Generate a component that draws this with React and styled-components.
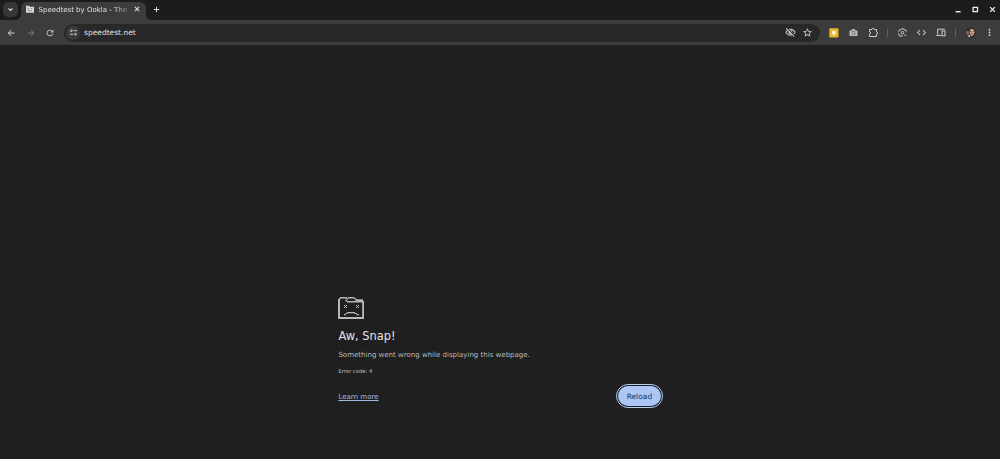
import React from 'react';
import styled, { createGlobalStyle } from 'styled-components';
import {
    MdArrowBack,
    MdArrowForward,
    MdRefresh,
    MdOutlineVisibilityOff,
    MdStarBorder,
    MdCode,
    MdMoreVert,
} from 'react-icons/md';

const GlobalStyle = createGlobalStyle`
    * {
        box-sizing: border-box;
    }
    body {
        margin: 0;
        background: #1f1f1f;
        font-family: "DejaVu Sans", sans-serif;
        overflow: hidden;
    }
    svg {
        display: block;
        flex: none;
    }
`;

const Browser = styled.div`
    display: flex;
    flex-direction: column;
    width: 100%;
    height: 459px;
    background: #1f1f1f;
`;

const TabStrip = styled.div`
    display: flex;
    align-items: flex-end;
    height: 20px;
    background: #1b1d1c;
    color: #dcdcdc;
`;

const TabSearch = styled.div`
    display: flex;
    align-items: center;
    justify-content: center;
    width: 15px;
    height: 15px;
    margin: 0 3.5px 3.5px 2.5px;
    border-radius: 5px;
    background: #363736;
`;

const Tab = styled.div`
    position: relative;
    display: flex;
    align-items: center;
    width: 125px;
    height: 18.5px;
    padding: 0 4px 3px 4.5px;
    border-radius: 6px 6px 0 0;
    background: #3c3c3c;

    /* flared feet of the active tab */
    &:before,
    &:after {
        content: '';
        position: absolute;
        bottom: 0;
        width: 5px;
        height: 5px;
    }
    &:before {
        left: -5px;
        background: radial-gradient(circle at 0 0, transparent 4.5px, #3c3c3c 5px);
    }
    &:after {
        right: -5px;
        background: radial-gradient(circle at 100% 0, transparent 4.5px, #3c3c3c 5px);
    }
`;

const TabTitle = styled.div`
    width: 90px;
    margin: 0 4.5px 0 5px;
    padding-top: 1px;
    white-space: nowrap;
    font-size: 7px;
    line-height: 10px;
    color: #e0e0e0;
    mask-image: linear-gradient(to right, #000 82%, rgba(0, 0, 0, 0.25) 100%);
`;

const NewTab = styled.div`
    margin: 0 0 6px 6px;
`;

const WindowControls = styled.div`
    display: flex;
    align-items: center;
    gap: 8px;
    height: 18px;
    margin: 0 3px 2px auto;
    color: #f0f0f0;
`;

const Toolbar = styled.div`
    display: flex;
    align-items: center;
    height: 25px;
    background: #3c3c3c;
    color: #cfcfcf;
`;

const Slot = styled.div`
    display: flex;
    align-items: center;
    justify-content: center;
    flex: none;
    width: ${({ $w }) => $w || 19.5}px;
    color: ${({ $muted }) => ($muted ? '#7b7b7b' : 'inherit')};
`;

const AddressBar = styled.div`
    display: flex;
    align-items: center;
    width: 756px;
    height: 18px;
    margin: 0 4.5px 0 4px;
    padding: 0 3.5px 0 2px;
    border-radius: 9px;
    background: #282828;
`;

const SiteInfo = styled.div`
    display: flex;
    align-items: center;
    justify-content: center;
    width: 14px;
    height: 14px;
    border-radius: 50%;
    background: #3b3b3b;
`;

const Url = styled.div`
    flex: 1;
    margin-left: 4px;
    font-size: 7.5px;
    line-height: 12px;
    color: #e2e2e2;
`;

const Divider = styled.div`
    width: 1px;
    height: 8px;
    margin: 0 4.2px;
    background: #606060;
`;

const Page = styled.main`
    width: 325.5px;
    margin: 252px 0 0 338.4px;
`;

const Heading = styled.h1`
    margin: 8px 0 0;
    font-size: 11.4px;
    font-weight: 400;
    line-height: 16px;
    color: #e2e2e2;
`;

const Message = styled.p`
    margin: 5px 0 0;
    font-size: 7.03px;
    line-height: 11px;
    color: #bcbcbc;
`;

const ErrorCode = styled.div`
    margin-top: 7px;
    font-size: 5.25px;
    line-height: 9px;
    color: #c4c4c4;
`;

const Actions = styled.div`
    display: flex;
    align-items: center;
    justify-content: space-between;
    margin-top: 10px;
    padding-right: 3px;
`;

const LearnMore = styled.a`
    font-size: 7.05px;
    line-height: 11px;
    color: #a3b8e2;
    text-decoration: underline;
`;

const ReloadButton = styled.button`
    width: 43px;
    height: 20px;
    padding: 0;
    border: 0;
    border-radius: 10px;
    outline: 1.5px solid #b4cbf5;
    outline-offset: 1px;
    background: #aec6f4;
    color: #2a4a86;
    font: 500 7.5px/19px "DejaVu Sans", sans-serif;
    -webkit-text-stroke: 0.12px;
`;

const FolderIcon = () => (
    <svg width="8" height="8" viewBox="0 0 8 8">
        <path d="M0 .8h3.2l.8.9h4v6H0z" fill="#d6d6d6" />
        <path d="M1.7 3.3h1v.8h-1zM5.2 3.3h1v.8h-1zM2 5.5h4v.6H2z" fill="#555" />
    </svg>
);

const ChevronIcon = () => (
    <svg width="9" height="9" viewBox="0 0 9 9" fill="none" stroke="currentColor" strokeWidth="1.1">
        <path d="M2.5 3.5l2 2 2-2" />
    </svg>
);

const CrossIcon = ({ size = 8 }) => (
    <svg width={size} height={size} viewBox="0 0 8 8" fill="none" stroke="currentColor" strokeWidth="1.1">
        <path d="M1.9 1.9l4.200 4.200M6.100 1.900L1.900 6.100" />
    </svg>
);

const PlusIcon = () => (
    <svg width="9" height="9" viewBox="0 0 9 9" fill="none" stroke="currentColor" strokeWidth="1">
        <path d="M4.5 1.800v5.400M1.800 4.500h5.400" />
    </svg>
);

const TuneIcon = () => (
    <svg width="9" height="9" viewBox="0 0 9 9" fill="none" stroke="#cfcfcf" strokeWidth="1">
        <path d="M4.8 2.700h3.200M1 6.300h3.200" />
        <circle cx="2.400" cy="2.700" r=".9" />
        <circle cx="6.500" cy="6.300" r=".9" />
    </svg>
);

const NoteIcon = () => (
    <svg width="10" height="10" viewBox="0 0 10 10">
        <rect x=".3" y=".3" width="9.2" height="9.2" rx=".8" fill="#edb42f" />
        <circle cx="4.9" cy="4.4" r="2" fill="#fff6d9" />
        <path d="M4 6h1.8v1.5H4z" fill="#fff6d9" />
    </svg>
);

const CameraIcon = () => (
    <svg width="9" height="9" viewBox="0 0 9 9">
        <path d="M.5 2.5h2l.7-1.4h2.6l.7 1.4h2v5.5h-8z" fill="#b9b9b9" />
        <circle cx="4.5" cy="4.9" r="1.9" fill="#686868" />
        <circle cx="4.5" cy="4.9" r="1" fill="#d5d5d5" />
    </svg>
);

const PuzzleIcon = () => (
    <svg width="11" height="11" viewBox="0 0 11 11" fill="none" stroke="currentColor" strokeWidth="1">
        <path d="M1.500 2.500h2.400c0-1.500 2.400-1.500 2.400 0h2.200v2.400c1.500.1 1.500 2.200 0 2.300v2.300h-7V7.300c1.500-.2 1.500-2.300 0-2.500z" strokeLinejoin="round" />
    </svg>
);

const LensIcon = () => (
    <svg width="9" height="9" viewBox="0 0 9 9" fill="none" stroke="currentColor" strokeWidth="1">
        <path d="M.8 3.7V3a1.2 1.2 0 0 1 1.2-1.2h.9l.6-1h2l.6 1H7A1.2 1.2 0 0 1 8.2 3v.7M.8 5.4v1.4A1.2 1.2 0 0 0 2 8h2.7" />
        <circle cx="4.5" cy="4.7" r="1.3" />
        <circle cx="7.3" cy="7.2" r=".8" fill="currentColor" stroke="none" />
    </svg>
);

const DevicesIcon = () => (
    <svg width="10" height="9" viewBox="0 0 10 9" fill="none" stroke="currentColor" strokeWidth="1">
        <path d="M8.8 1.2H1.7v5.5M.3 7.5h4.9" />
        <rect x="6" y="3" width="3" height="4.8" />
    </svg>
);

const Avatar = () => (
    <svg width="11" height="11" viewBox="0 0 11 11">
        <circle cx="5.5" cy="5.5" r="5.3" fill="#302927" />
        <path d="M.8 4.6l2.4-.8 1 1.7-.7 2.6L1.6 7.6z" fill="#8d6c5d" />
        <path d="M4.7 3.2L6.5 1.8l2.2.7.8 2.7-1.1 3-2 1-1.5-1.8z" fill="#c9a18d" />
        <path d="M5 4h1.4v.8H5zM7.6 4h1v.8h-1zM5.8 6.6h1.8v.6H5.8z" fill="#654239" />
        <path d="M2.4 8.6l2.4-.6.6 2.2-1.6-.2z" fill="#b9bcc0" />
    </svg>
);

const SadFolder = () => (
    <svg width="27" height="23" viewBox="0 0 27 23">
        <g fill="#b8b8b8">
            <path d="M2 0h7v1.500H2zM1 1h1.500v1.500H1zM8.500 1H10v1.500H8.500zM10 0h6.500v1.500H10zM16.500 1H18v1.500h-1.500z" />
            <path d="M0 2h2v20H0zM0 20h26v2H0zM24.200 4H26v18h-1.800zM9 4h16v1.500H9zM17.500 2.300H25V4h-7.500zM7.500 2.500H9v2H7.500z" />
            <path d="M6 8h1v1H6zM8 8h1v1H8zM7 9h1v1H7zM6 10h1v1H6zM8 10h1v1H8z" />
            <path d="M18 8h1v1h-1zM20 8h1v1h-1zM19 9h1v1h-1zM18 10h1v1h-1zM20 10h1v1h-1z" />
            <path d="M9 15h8v1.200H9zM7.500 16h2v1h-2zM16.500 16H19v1h-2.500zM6 17h1.800v1.200H6zM18.600 17H21v1.200h-2.400z" />
        </g>
    </svg>
);

const MinimizeIcon = () => (
    <svg width="9" height="9" viewBox="0 0 9 9">
        <path d="M1.6 6h5v1.4h-5z" fill="currentColor" />
    </svg>
);

const MaximizeIcon = () => (
    <svg width="9" height="9" viewBox="0 0 9 9">
        <path d="M2.1 2.4h4.4v4.2H2.1z" fill="none" stroke="currentColor" strokeWidth="1.3" />
    </svg>
);

const App = () => {
    return (
        <Browser>
            <GlobalStyle />
            <TabStrip>
                <TabSearch>
                    <ChevronIcon />
                </TabSearch>
                <Tab>
                    <FolderIcon />
                    <TabTitle>Speedtest by Ookla - The</TabTitle>
                    <CrossIcon />
                </Tab>
                <NewTab>
                    <PlusIcon />
                </NewTab>
                <WindowControls>
                    <MinimizeIcon />
                    <MaximizeIcon />
                    <CrossIcon size={9} />
                </WindowControls>
            </TabStrip>
            <Toolbar>
                <Slot $w={22.5}><MdArrowBack size={10} /></Slot>
                <Slot $w={16.5} $muted><MdArrowForward size={10} /></Slot>
                <Slot $w={21}><MdRefresh size={10} /></Slot>
                <AddressBar>
                    <SiteInfo>
                        <TuneIcon />
                    </SiteInfo>
                    <Url>speedtest.net</Url>
                    <Slot $w={17.5}><MdOutlineVisibilityOff size={11} /></Slot>
                    <Slot $w={17.5}><MdStarBorder size={11} /></Slot>
                </AddressBar>
                <Slot><NoteIcon /></Slot>
                <Slot><CameraIcon /></Slot>
                <Slot><PuzzleIcon /></Slot>
                <Divider />
                <Slot><LensIcon /></Slot>
                <Slot><MdCode size={11} /></Slot>
                <Slot><DevicesIcon /></Slot>
                <Divider />
                <Slot><Avatar /></Slot>
                <Slot><MdMoreVert size={11} /></Slot>
            </Toolbar>
            <Page>
                <SadFolder />
                <Heading>Aw, Snap!</Heading>
                <Message>Something went wrong while displaying this webpage.</Message>
                <ErrorCode>Error code: 4</ErrorCode>
                <Actions>
                    <LearnMore>Learn more</LearnMore>
                    <ReloadButton>Reload</ReloadButton>
                </Actions>
            </Page>
        </Browser>
    );
};

export default App;
